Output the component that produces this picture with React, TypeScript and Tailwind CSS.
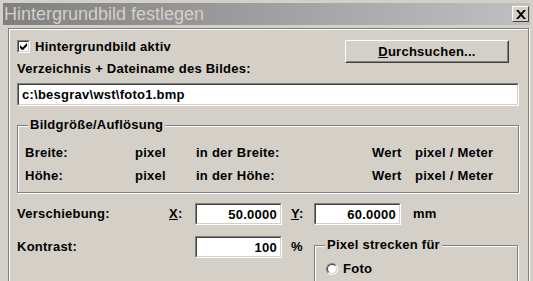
import React from 'react';

const sunken =
  'border border-t-[#808080] border-l-[#808080] border-b-white border-r-white';
const sunkenInner =
  'border border-t-[#404040] border-l-[#404040] border-b-[#d4d0c8] border-r-[#d4d0c8] bg-white';

function Field({ value, align = 'left', className = '' }: { value: string; align?: 'left' | 'right'; className?: string }) {
  return (
    <div className={`${sunken} h-[22px] ${className}`}>
      <div
        className={`${sunkenInner} h-full flex items-center px-[3px] ${align === 'right' ? 'justify-end' : 'justify-start'}`}
      >
        <span className="leading-[13px]">{value}</span>
      </div>
    </div>
  );
}

function GroupBox({ label, className = '', children }: { label: string; className?: string; children?: React.ReactNode }) {
  return (
    <div
      className={`relative border border-[#808080] shadow-[inset_1px_1px_0_#fff,1px_1px_0_#fff] ${className}`}
    >
      <span className="absolute -top-[8px] left-[10px] bg-[#d4d0c8] px-[2px] leading-[14px]">{label}</span>
      {children}
    </div>
  );
}

export default function App() {
  return (
    <div
      className="w-[533px] h-[281px] overflow-hidden bg-[#d4d0c8] pt-[3px] px-[3px] text-[13px] tracking-[0.25px] font-bold text-black"
      style={{ fontFamily: '"Liberation Sans", Arial, sans-serif' }}
    >
      {/* title bar */}
      <div className="h-[22px] flex items-center justify-between bg-gradient-to-r from-[#808080] to-[#c0c0c0]">
        <span className="pl-[1px] text-[18px] font-normal tracking-normal leading-[22px] text-[#d4d0c8]">
          Hintergrundbild festlegen
        </span>
        <div className="mr-[1px] w-[17px] h-[16px] border border-t-white border-l-white border-b-[#404040] border-r-[#404040] bg-[#d4d0c8] flex items-center justify-center">
          <svg width="10" height="9" viewBox="0 0 10 9">
            <path d="M0 0h2.4l2.6 3 2.6-3H10L6.2 4.5 10 9H7.6L5 6 2.4 9H0l3.8-4.5z" fill="#000" />
          </svg>
        </div>
      </div>

      {/* body frame */}
      <div className="mt-[3px] ml-[5px] mr-[1px] h-[260px] border border-[#808080] shadow-[inset_1px_1px_0_#fff,1px_1px_0_#fff] pl-[8px] pr-[9px] pt-[11px]">
        <div className="flex items-start justify-between">
          <div className="flex flex-col">
            <div className="flex items-center h-[13px]">
              <div className={`${sunken} w-[13px] h-[13px]`}>
                <div className={`${sunkenInner} w-full h-full flex items-center justify-center`}>
                  <svg width="7" height="7" viewBox="0 0 7 7">
                    <path d="M0 2v3l2 2h1l4-4V0L2.5 4.5z" fill="#000" />
                  </svg>
                </div>
              </div>
              <span className="ml-[5px] leading-[13px]">Hintergrundbild aktiv</span>
            </div>
            <span className="mt-[9px] leading-[13px]">Verzeichnis + Dateiname des Bildes:</span>
          </div>
          <div className="mr-[10px] w-[164px] h-[23px] border border-t-white border-l-white border-b-[#404040] border-r-[#404040]">
            <div className="h-full border border-t-transparent border-l-transparent border-b-[#808080] border-r-[#808080] flex items-center justify-center">
              <span className="leading-[13px]">
                <span className="underline">D</span>urchsuchen...
              </span>
            </div>
          </div>
        </div>

        <Field value="c:\besgrav\wst\foto1.bmp" className="mt-[8px] h-[23px]" />

        <GroupBox label="Bildgröße/Auflösung" className="mt-[19px] h-[68px] pl-[7px] pt-[20px]">
          <div className="grid grid-cols-[110px_61px_176px_43px_auto] gap-y-[10px] leading-[13px]">
            <span>Breite:</span>
            <span>pixel</span>
            <span>in der Breite:</span>
            <span>Wert</span>
            <span>pixel / Meter</span>
            <span>Höhe:</span>
            <span>pixel</span>
            <span>in der Höhe:</span>
            <span>Wert</span>
            <span>pixel / Meter</span>
          </div>
        </GroupBox>

        <div className="mt-[10px] flex items-center h-[22px]">
          <span className="w-[152px]">Verschiebung:</span>
          <span className="w-[26px]">
            <span className="underline">X</span>:
          </span>
          <Field value="50.0000" align="right" className="w-[87px]" />
          <span className="ml-[9px] w-[23px]">
            <span className="underline">Y</span>:
          </span>
          <Field value="60.0000" align="right" className="w-[87px]" />
          <span className="ml-[12px]">mm</span>
        </div>

        <div className="mt-[11px] flex items-start">
          <div className="flex items-center h-[22px]">
            <span className="w-[178px]">Kontrast:</span>
            <Field value="100" align="right" className="w-[87px]" />
            <span className="ml-[9px] w-[23px]">%</span>
          </div>
          <GroupBox label="Pixel strecken für" className="mt-[9px] mr-[1px] flex-1 h-[60px] pl-[11px] pt-[16px]">
            <div className="flex items-center">
              <div className="w-[12px] h-[12px] rounded-full border border-t-[#808080] border-l-[#808080] border-b-white border-r-white">
                <div className="w-full h-full rounded-full border border-t-[#404040] border-l-[#404040] border-b-[#d4d0c8] border-r-[#d4d0c8] bg-white" />
              </div>
              <span className="ml-[5px] leading-[13px]">Foto</span>
            </div>
          </GroupBox>
        </div>
      </div>
    </div>
  );
}
